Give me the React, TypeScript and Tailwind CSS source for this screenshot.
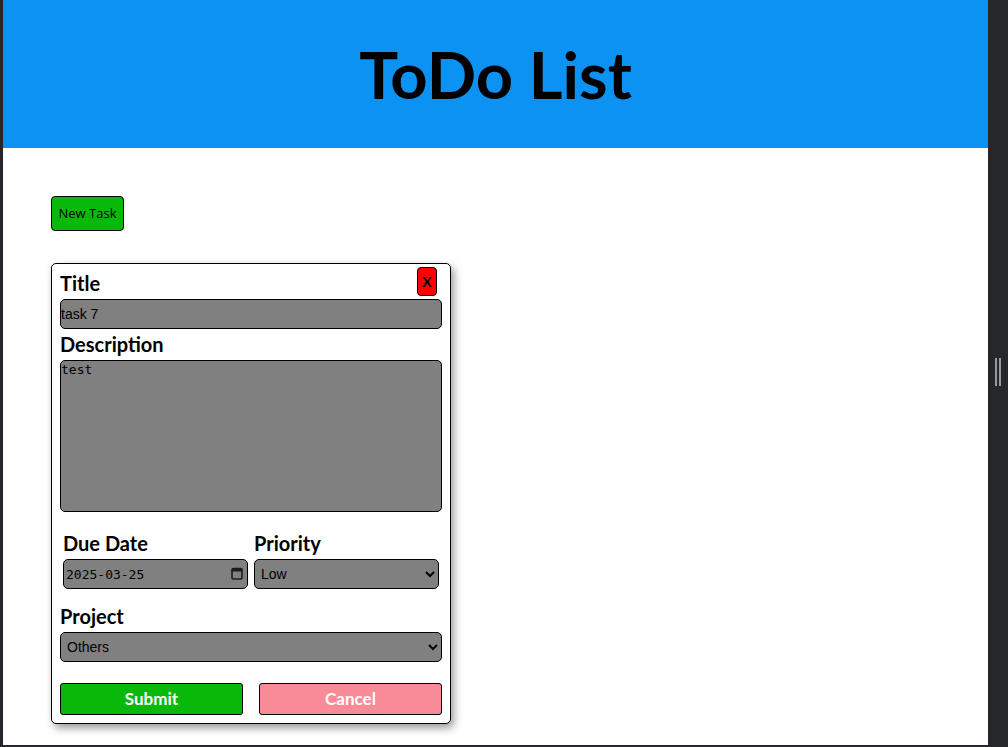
import React from 'react';

const labelCls = "block text-[20px] leading-[22px] font-bold text-black [font-family:Lato,sans-serif]";
const fieldCls = "block w-full h-[30px] bg-[#808080] border border-black rounded-[5px] text-black";

const CalendarIcon: React.FC = () => (
  <svg width="12" height="13" viewBox="0 0 12 13" className="absolute right-[5px] top-[8px]">
    <rect x="1" y="1.5" width="10" height="10.5" rx="1.2" fill="none" stroke="#1c1c1c" strokeWidth="1.6" />
    <rect x="1" y="1.5" width="10" height="3" fill="#1c1c1c" />
  </svg>
);

const TaskForm: React.FC = () => {
  return (
    <form className="relative w-[400px] bg-white border border-black rounded-[5px] px-[8px] pt-[8px] pb-[8px] shadow-[3px_4px_8px_rgba(0,0,0,0.4)]">
      <button
        type="button"
        className="absolute top-[3px] right-[13px] w-[20px] h-[29px] bg-[#ff0000] border border-black rounded-[4px] text-[14px] font-bold text-black [font-family:Lato,sans-serif]"
      >
        X
      </button>

      <label className={labelCls}>Title</label>
      <input
        type="text"
        defaultValue="task 7"
        className={`${fieldCls} mt-[5px] px-0 text-[14px] [font-family:'Liberation_Sans',Arial,sans-serif]`}
      />

      <label className={`${labelCls} mt-[4px]`}>Description</label>
      <textarea
        defaultValue="test"
        className="block w-full h-[152px] mt-[5px] bg-[#808080] border border-black rounded-[5px] px-0 py-[1px] text-[13px] leading-[16px] text-black resize-none [font-family:'DejaVu_Sans_Mono',monospace]"
      />

      <div className="grid grid-cols-2 mt-[20px]">
        <div className="px-[3px]">
          <label className={labelCls}>Due Date</label>
          <div className="relative mt-[5px]">
            <input
              type="text"
              defaultValue="2025-03-25"
              className={`${fieldCls} px-[2px] text-[13px] [font-family:'DejaVu_Sans_Mono',monospace]`}
            />
            <CalendarIcon />
          </div>
        </div>
        <div className="pl-[3px] pr-[3px]">
          <label className={labelCls}>Priority</label>
          <select
            defaultValue="low"
            className={`${fieldCls} mt-[5px] pl-[2px] text-[14px] [font-family:'Liberation_Sans',Arial,sans-serif]`}
          >
            <option value="low">Low</option>
            <option value="medium">Medium</option>
            <option value="high">High</option>
          </select>
        </div>
      </div>

      <label className={`${labelCls} mt-[16px]`}>Project</label>
      <select
        defaultValue="others"
        className={`${fieldCls} mt-[5px] pl-[2px] text-[14px] [font-family:'Liberation_Sans',Arial,sans-serif]`}
      >
        <option value="others">Others</option>
      </select>

      <div className="flex justify-between mt-[21px]">
        <button
          type="submit"
          className="w-[183px] h-[32px] bg-[#09b909] border border-black rounded-[3px] text-white text-[17px] font-bold [font-family:Lato,sans-serif]"
        >
          Submit
        </button>
        <button
          type="button"
          className="w-[183px] h-[32px] bg-[#f98b98] border border-black rounded-[3px] text-white text-[17px] font-bold [font-family:Lato,sans-serif]"
        >
          Cancel
        </button>
      </div>
    </form>
  );
};

const App: React.FC = () => {
  return (
    <div className="flex w-[1008px] h-[747px] bg-[#26272b] overflow-hidden">
      <div className="w-[3px] shrink-0" />
      <div className="w-[985px] h-[745px] bg-white flex flex-col">
        <header className="h-[148px] bg-[#0c92f2] flex items-center justify-center">
          <h1 className="text-[65px] font-bold text-black pt-[2px] [font-family:Lato,sans-serif]">
            ToDo List
          </h1>
        </header>
        <main className="px-[48px] pt-[48px]">
          <button
            type="button"
            className="w-[73px] h-[35px] bg-[#09b909] border border-black rounded-[4px] text-[13px] text-black [font-family:'Open_Sans',sans-serif]"
          >
            New Task
          </button>
          <div className="mt-[32px]">
            <TaskForm />
          </div>
        </main>
      </div>
      <div className="w-[20px] shrink-0 flex justify-center gap-[2px] pt-[358px]">
        <div className="w-[2px] h-[28px] bg-[#9a9a9a]" />
        <div className="w-[2px] h-[28px] bg-[#9a9a9a]" />
      </div>
    </div>
  );
};

export default App;
